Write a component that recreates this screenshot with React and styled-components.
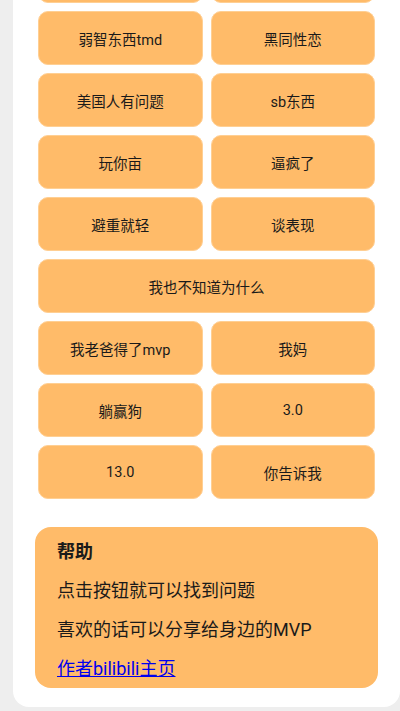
import styled, { createGlobalStyle } from 'styled-components';

const GlobalStyle = createGlobalStyle`
  html, body {
    margin: 0;
    padding: 0;
    background: #eeeeee;
    overflow: hidden;
  }
  body {
    font-family: Roboto, "Noto Sans CJK SC", sans-serif;
    color: #1a1a1a;
  }
`;

const Page = styled.div`
  padding-left: 13px;
  height: 711px;
  overflow: hidden;
`;

// the screenshot is scrolled, so the card starts above the viewport
const Card = styled.main`
  background: #ffffff;
  border-radius: 16px;
  margin-top: -80px;
  width: 387px;
  padding: 29px 22px 19px 22px;
  box-sizing: border-box;
`;

const Grid = styled.div`
  display: grid;
  grid-template-columns: 1fr 1fr;
  grid-auto-rows: 54px;
  gap: 8px;
  margin: 0 3px;
`;

const Btn = styled.button`
  grid-column: ${({ $wide }) => ($wide ? 'span 2' : 'auto')};
  background: #ffbb69;
  border: 1px solid #ffcf93;
  border-radius: 10px;
  font-family: Roboto, "Noto Sans CJK SC", sans-serif;
  font-size: 14.5px;
  color: #1a1a1a;
  padding: 0;
  cursor: pointer;
`;

const Help = styled.section`
  margin-top: 28px;
  background: #ffbb69;
  border-radius: 16px;
  padding: 12px 22px 7px 22px;
  display: flex;
  flex-direction: column;
  gap: 14px;
  font-size: 18px;
  line-height: 25px;
`;

const Title = styled.h3`
  margin: 0;
  font-size: 18px;
  font-weight: bold;
`;

const Line = styled.p`
  margin: 0;
`;

const Link = styled.a`
  color: #0000ee;
  text-decoration: underline;
`;

const rows = [
  ['', ''],
  ['弱智东西tmd', '黑同性恋'],
  ['美国人有问题', 'sb东西'],
  ['玩你亩', '逼疯了'],
  ['避重就轻', '谈表现'],
  ['我也不知道为什么'],
  ['我老爸得了mvp', '我妈'],
  ['躺赢狗', '3.0'],
  ['13.0', '你告诉我'],
];

export default function App() {
  return (
    <Page>
      <GlobalStyle />
      <Card>
        <Grid>
          {rows.map((row, i) =>
            row.map((label, j) => (
              <Btn key={`${i}-${j}`} $wide={row.length === 1}>
                {label}
              </Btn>
            ))
          )}
        </Grid>
        <Help>
          <Title>帮助</Title>
          <Line>点击按钮就可以找到问题</Line>
          <Line>喜欢的话可以分享给身边的MVP</Line>
          <Line>
            <Link href="#">作者bilibili主页</Link>
          </Line>
        </Help>
      </Card>
    </Page>
  );
}
